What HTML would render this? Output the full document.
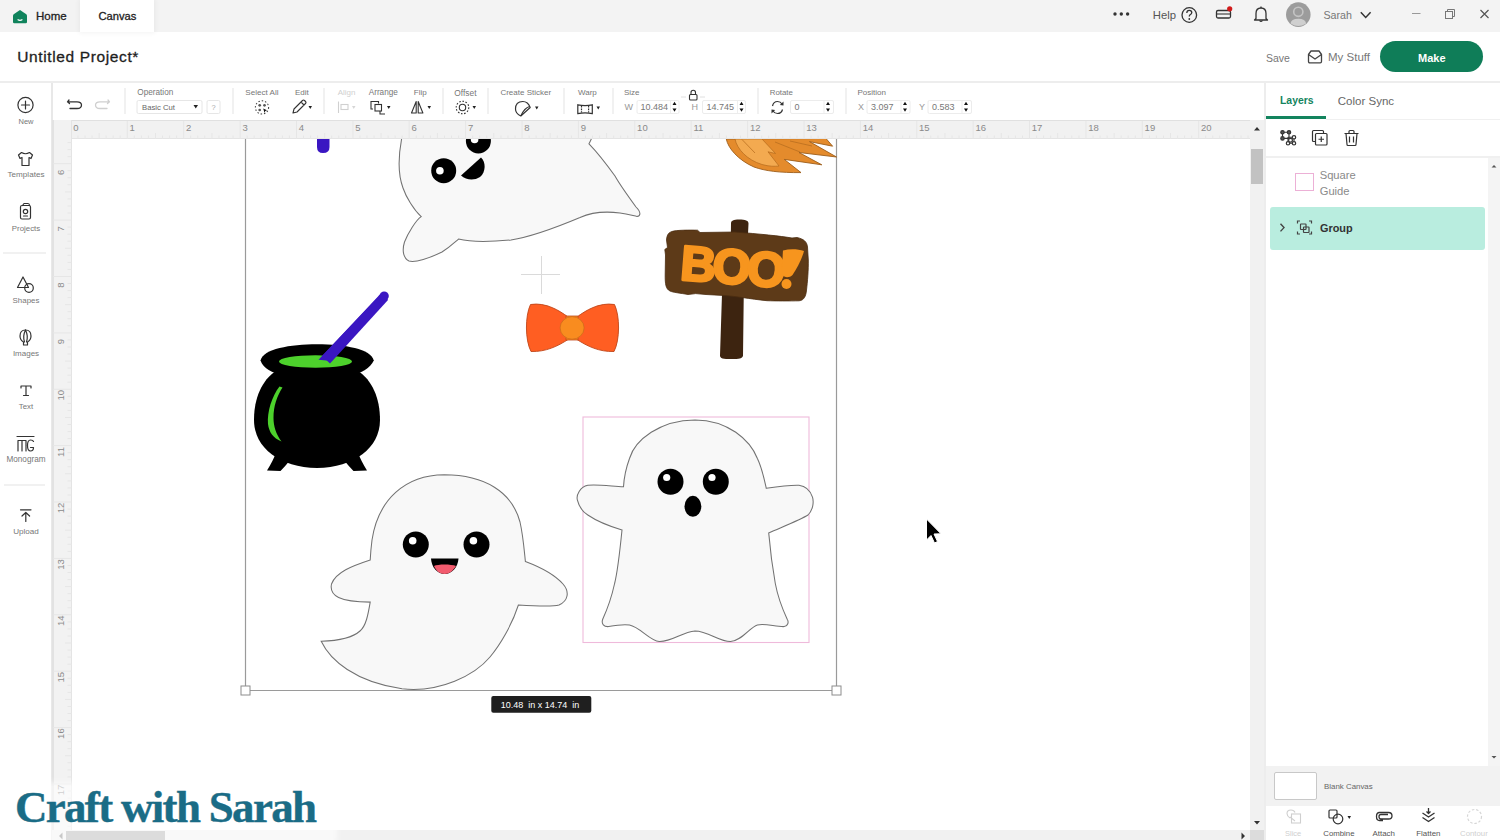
<!DOCTYPE html>
<html><head><meta charset="utf-8">
<style>
*{box-sizing:border-box}
html,body{margin:0;padding:0}
body{width:1500px;height:840px;position:relative;overflow:hidden;background:#fff;font-family:"Liberation Sans",sans-serif;color:#333}
.a{position:absolute}
.t{position:absolute;white-space:nowrap;line-height:1}
.lbl{position:absolute;white-space:nowrap;line-height:1;font-size:7.5px;color:#777}
.sep{position:absolute;top:88px;width:1px;height:26px;background:#e2e2e2}
.inp{position:absolute;top:101px;height:13px;border:1px solid #ececec;border-radius:2px;background:#fff;font-size:8px;color:#888;line-height:11px;padding-left:4px}
.sb{position:absolute;left:10px;width:32px;text-align:center;font-size:7.5px;color:#777;line-height:1}
</style></head>
<body>
<!-- top bar -->
<div class="a" style="left:0;top:0;width:1500px;height:32px;background:#f3f3f3"></div>
<div class="a" style="left:80px;top:0;width:74px;height:32px;background:#fff;box-shadow:0 0 5px 1px rgba(0,0,0,0.05)"></div>
<svg class="a" style="left:12px;top:9px" width="16" height="15" viewBox="0 0 16 15"><path d="M8 1 L14.3 5.3 Q15 5.8 15 6.8 V13 Q15 14.2 13.8 14.2 H2.2 Q1 14.2 1 13 V6.8 Q1 5.8 1.7 5.3 Z" fill="#10835c"/><path d="M5.6 10.6 Q8 12.2 10.4 10.6" stroke="#fff" stroke-width="1.2" fill="none"/></svg>
<div class="t" style="left:36px;top:11px;font-size:11.5px;color:#222;-webkit-text-stroke:0.3px #222">Home</div>
<div class="t" style="left:98.5px;top:11px;font-size:11.2px;color:#222;-webkit-text-stroke:0.3px #222">Canvas</div>
<svg class="a" style="left:1100px;top:0" width="400" height="32" viewBox="1100 0 400 32">
<circle cx="1115" cy="14" r="1.7" fill="#333"/><circle cx="1121.3" cy="14" r="1.7" fill="#333"/><circle cx="1127.6" cy="14" r="1.7" fill="#333"/>
<circle cx="1189.3" cy="15" r="7.3" fill="none" stroke="#333" stroke-width="1.3"/>
<path d="M1186.8 13 Q1186.8 10.3 1189.3 10.3 Q1191.8 10.3 1191.8 12.6 Q1191.8 14 1190 14.8 Q1189.3 15.2 1189.3 16.6" fill="none" stroke="#333" stroke-width="1.3"/><circle cx="1189.3" cy="19" r="0.9" fill="#333"/>
<rect x="1216.5" y="10.5" width="14" height="7.5" rx="1.5" fill="none" stroke="#333" stroke-width="1.3"/><path d="M1216.5 14 H1230.5" stroke="#333" stroke-width="1.1"/>
<circle cx="1229.7" cy="8.8" r="2.6" fill="#d11a1a"/>
<path d="M1256 18.5 V13.5 Q1256 8 1261 8 Q1266 8 1266 13.5 V18.5 L1267.5 20 H1254.5 Z" fill="none" stroke="#333" stroke-width="1.3" stroke-linejoin="round"/><path d="M1259.5 20.5 Q1261 22.5 1262.5 20.5" fill="none" stroke="#333" stroke-width="1.2"/><path d="M1261 6.5 V8" stroke="#333" stroke-width="1.2"/>
<circle cx="1298.3" cy="14.6" r="12.3" fill="#9c9c9c"/><circle cx="1298.3" cy="11.8" r="4.6" fill="none" stroke="#c4c4c4" stroke-width="1.6"/><path d="M1290.5 23.5 Q1291 18.8 1298.3 18.8 Q1305.6 18.8 1306.1 23.5 Q1302 26 1298.3 26 Q1294.6 26 1290.5 23.5 Z" fill="#cfcfcf"/>
<path d="M1360.8 12.3 L1365.7 17.5 L1370.6 12.3" fill="none" stroke="#333" stroke-width="1.5"/>
<path d="M1412 13.5 H1420.5" stroke="#999" stroke-width="1"/>
<rect x="1445.5" y="11.5" width="7" height="7" fill="none" stroke="#777" stroke-width="1"/><path d="M1447.5 11.5 V9.5 H1454.5 V16.5 H1452.5" fill="none" stroke="#777" stroke-width="1"/>
<path d="M1480.5 10 L1488.5 18 M1488.5 10 L1480.5 18" stroke="#555" stroke-width="1.2"/>
</svg>
<div class="t" style="left:1152.8px;top:10px;font-size:11.3px;color:#555">Help</div>
<div class="t" style="left:1323.4px;top:9.5px;font-size:10.7px;color:#777">Sarah</div>

<!-- header -->
<div class="a" style="left:0;top:81px;width:1500px;height:2px;background:#ededed"></div>
<div class="t" style="left:17.3px;top:48.9px;font-size:15.5px;letter-spacing:0.62px;color:#1e1e1e;-webkit-text-stroke:0.3px #1e1e1e">Untitled Project*</div>
<div class="t" style="left:1266px;top:53.1px;font-size:10.5px;color:#777">Save</div>
<svg class="a" style="left:1306px;top:48px" width="18" height="17" viewBox="0 0 18 17"><path d="M2.5 6.5 L5 3 H13 L15.5 6.5 V13.5 Q15.5 14.8 14.2 14.8 H3.8 Q2.5 14.8 2.5 13.5 Z" fill="none" stroke="#444" stroke-width="1.3" stroke-linejoin="round"/><path d="M2.5 6.5 L9 11 L15.5 6.5" fill="none" stroke="#444" stroke-width="1.3" stroke-linejoin="round"/></svg>
<div class="t" style="left:1328px;top:52.3px;font-size:11.5px;color:#777">My Stuff</div>
<div class="a" style="left:1379.5px;top:41.3px;width:103.7px;height:31.2px;border-radius:16px;background:#0f7d58"></div>
<div class="t" style="left:1418px;top:52.7px;font-size:11px;color:#fff;font-weight:bold">Make</div>

<!-- toolbar -->
<svg class="a" style="left:52px;top:83px" width="1212" height="37" viewBox="52 83 1212 37">
<g fill="none" stroke="#333" stroke-width="1.3" stroke-linecap="round" stroke-linejoin="round">
<path d="M69 100 L67.5 101.8 L69.5 103.5 M67.5 101.8 H77 Q81.5 101.8 81.5 105 Q81.5 108.5 77 108.5 H70"/>
</g>
<g fill="none" stroke="#cfcfcf" stroke-width="1.3" stroke-linecap="round" stroke-linejoin="round">
<path d="M108 100 L109.5 101.8 L107.5 103.5 M109.5 101.8 H100 Q95.5 101.8 95.5 105 Q95.5 108.5 100 108.5 H107"/>
</g>
<g fill="#e4e4e4"><rect x="124.5" y="88" width="1" height="26"/><rect x="232.5" y="88" width="1" height="26"/><rect x="323.5" y="88" width="1" height="26"/><rect x="442.5" y="88" width="1" height="26"/><rect x="487.5" y="88" width="1" height="26"/><rect x="563.5" y="88" width="1" height="26"/><rect x="612.5" y="88" width="1" height="26"/><rect x="757.5" y="88" width="1" height="26"/><rect x="845.5" y="88" width="1" height="26"/></g>
<!-- operation dropdown -->
<rect x="137" y="100.5" width="65" height="13" rx="1.5" fill="#fff" stroke="#e6e6e6"/>
<path d="M193.5 105 L198 105 L195.75 108.5 Z" fill="#222"/>
<rect x="207" y="100.5" width="13" height="13" rx="1.5" fill="#fff" stroke="#e6e6e6"/>
<!-- select all -->
<g fill="none" stroke="#444" stroke-width="1.1" stroke-dasharray="1.5 1.9"><circle cx="262" cy="107.4" r="6.6"/></g>
<g fill="#555"><circle cx="259.7" cy="105.3" r="1.35"/><circle cx="264.5" cy="105.3" r="1.35"/><circle cx="259.7" cy="110" r="1.35"/></g><path d="M263.2 108.6 L267 110.3 L265.3 110.9 L264.5 112.8 Z" fill="#111"/>
<!-- edit pencil -->
<path d="M293 113 L294 109 L302.5 100.5 Q303.5 99.5 304.5 100.5 L305.5 101.5 Q306.5 102.5 305.5 103.5 L297 112 Z M301 102 L304 105" fill="none" stroke="#333" stroke-width="1.1" stroke-linejoin="round"/>
<path d="M308.5 106 L312 106 L310.25 109 Z" fill="#222"/>
<!-- align -->
<g fill="none" stroke="#d0d0d0" stroke-width="1.1"><path d="M338.5 101.5 V113"/><rect x="341" y="104.5" width="7" height="5"/></g>
<path d="M352 106 L355.5 106 L353.75 109 Z" fill="#d6d6d6"/>
<!-- arrange -->
<g fill="none" stroke="#333" stroke-width="1.1"><path d="M373 109 H371 V101.5 H378.5 V103.5"/><rect x="375" y="104.5" width="6.5" height="6.5"/><path d="M380 111 V114 H385"/></g>
<path d="M387 106 L390.5 106 L388.75 109 Z" fill="#222"/>
<!-- flip -->
<g fill="none" stroke="#333" stroke-width="1.1" stroke-linejoin="round"><path d="M416.2 101.5 L411.5 113 H416.2 Z"/><path d="M418.2 101.5 L422.9 113 H418.2 Z"/></g>
<path d="M427.5 106 L431 106 L429.25 109 Z" fill="#222"/>
<!-- offset -->
<g fill="none" stroke="#333" stroke-width="1.1"><circle cx="462.5" cy="107.5" r="3.2"/><circle cx="462.5" cy="107.5" r="6.3" stroke-dasharray="1.6 1.6"/></g>
<path d="M472.5 106 L476 106 L474.25 109 Z" fill="#222"/>
<!-- create sticker -->
<g fill="none" stroke="#333" stroke-width="1.2" stroke-linejoin="round"><path d="M530.2 107.5 Q528 101.5 522.8 101.5 Q515.5 101.5 515.5 109 Q515.5 113.5 520.8 116 L530.2 107.5 Z"/><path d="M529.5 106.5 Q524.5 108 521 115.5"/></g>
<path d="M535 106.5 L538.5 106.5 L536.75 109.5 Z" fill="#222"/>
<!-- warp -->
<g fill="none" stroke="#333" stroke-width="1.2"><path d="M577.8 104.8 Q585 106.3 592.3 104.8 V113.6 Q585 112.1 577.8 113.6 Z"/><path d="M581.5 105.8 V112.6 M588.6 105.8 V112.6" stroke-dasharray="1.8 0.9"/></g>
<path d="M596.5 106.5 L600 106.5 L598.25 109.5 Z" fill="#222"/>
<!-- size lock -->
<g fill="none" stroke="#333" stroke-width="1.1"><rect x="689.5" y="94.5" width="7.5" height="5.5" rx="1"/><path d="M691 94.5 V92.5 Q691 90.3 693.25 90.3 Q695.5 90.3 695.5 92.5 V94.5"/></g>
<path d="M681 97 H686 M700 97 H705" stroke="#e0e0e0" stroke-width="1"/>
<!-- inputs -->
<rect x="637" y="100.5" width="42" height="13" rx="1.5" fill="#fff" stroke="#ececec"/>
<rect x="702.5" y="100.5" width="43" height="13" rx="1.5" fill="#fff" stroke="#ececec"/>
<rect x="790.5" y="100.5" width="43" height="13" rx="1.5" fill="#fff" stroke="#ececec"/>
<rect x="867" y="100.5" width="43" height="13" rx="1.5" fill="#fff" stroke="#ececec"/>
<rect x="928" y="100.5" width="43.5" height="13" rx="1.5" fill="#fff" stroke="#ececec"/>
<g fill="#111"><path d="M672.5 105 L676.5 105 L674.5 101.8 Z M672.5 108.6 L676.5 108.6 L674.5 111.8 Z"/><path d="M739.5 105 L743.5 105 L741.5 101.8 Z M739.5 108.6 L743.5 108.6 L741.5 111.8 Z"/><path d="M826 105 L830 105 L828 101.8 Z M826 108.6 L830 108.6 L828 111.8 Z"/><path d="M903 105 L907 105 L905 101.8 Z M903 108.6 L907 108.6 L905 111.8 Z"/><path d="M964 105 L968 105 L966 101.8 Z M964 108.6 L968 108.6 L966 111.8 Z"/></g>
<g fill="#eee"><rect x="670" y="101" width="1" height="12"/><rect x="737" y="101" width="1" height="12"/><rect x="823.5" y="101" width="1" height="12"/><rect x="900.5" y="101" width="1" height="12"/><rect x="961.5" y="101" width="1" height="12"/></g>
<!-- rotate -->
<g fill="none" stroke="#333" stroke-width="1.2"><path d="M772.5 106 Q773.5 101.5 777.5 101.5 Q780.5 101.5 782 104"/><path d="M782.5 109.5 Q781.5 113.5 777.5 113.5 Q774.5 113.5 773 111"/></g>
<g fill="#333"><path d="M783.5 101.5 L783.5 105.5 L779.8 105 Z"/><path d="M771.5 113.5 L771.5 109.5 L775.2 110 Z"/></g>
</svg>
<div class="lbl" style="left:137.3px;top:88.5px;font-size:8.2px">Operation</div>
<div class="t" style="left:142px;top:103.5px;font-size:7.7px;color:#666">Basic Cut</div>
<div class="t" style="left:211.5px;top:103.5px;font-size:7.5px;color:#aaa">?</div>
<div class="lbl" style="left:245.3px;top:88.5px;font-size:8.1px">Select All</div>
<div class="lbl" style="left:295px;top:88.5px;font-size:8px">Edit</div>
<div class="lbl" style="left:337.7px;top:88.5px;font-size:8px;color:#d0d0d0">Align</div>
<div class="lbl" style="left:368.7px;top:88.5px;font-size:8.2px">Arrange</div>
<div class="lbl" style="left:413.8px;top:88.5px;font-size:8px">Flip</div>
<div class="lbl" style="left:454.3px;top:88.5px;font-size:8.4px">Offset</div>
<div class="lbl" style="left:500.4px;top:88.5px;font-size:8px">Create Sticker</div>
<div class="lbl" style="left:578px;top:88.5px;font-size:8px">Warp</div>
<div class="lbl" style="left:624px;top:88.5px;font-size:8px">Size</div>
<div class="lbl" style="left:769.7px;top:88.5px;font-size:7.9px">Rotate</div>
<div class="lbl" style="left:857.4px;top:88.5px;font-size:8px">Position</div>
<div class="t" style="left:624.5px;top:103.2px;font-size:9px;color:#999">W</div>
<div class="t" style="left:640.5px;top:103.2px;font-size:9px;color:#777">10.484</div>
<div class="t" style="left:691.5px;top:103.2px;font-size:9px;color:#999">H</div>
<div class="t" style="left:706.5px;top:103.2px;font-size:9px;color:#777">14.745</div>
<div class="t" style="left:794.5px;top:103.2px;font-size:9px;color:#777">0</div>
<div class="t" style="left:858px;top:103.2px;font-size:9px;color:#999">X</div>
<div class="t" style="left:871px;top:103.2px;font-size:9px;color:#777">3.097</div>
<div class="t" style="left:919px;top:103.2px;font-size:9px;color:#999">Y</div>
<div class="t" style="left:932px;top:103.2px;font-size:9px;color:#777">0.583</div>

<!-- left sidebar -->
<div class="a" style="left:51px;top:83px;width:1.5px;height:757px;background:#e8e8e8"></div>
<svg class="a" style="left:0;top:83px" width="52" height="470" viewBox="0 83 52 470">
<g fill="none" stroke="#333" stroke-width="1.2" stroke-linecap="round" stroke-linejoin="round">
<circle cx="25.5" cy="105" r="7.6"/><path d="M25.5 101 V109 M21.5 105 H29.5"/>
<path d="M21.5 152.5 L18.5 155 L20 158.5 L22 157.5 V165.5 H29 V157.5 L31 158.5 L32.5 155 L29.5 152.5 Q25.5 155 21.5 152.5 Z"/>
<rect x="20.5" y="205.5" width="10" height="13.5" rx="1.5"/><path d="M22.5 205.5 L24 203.5 H28 Q29.5 203.5 29.5 205.5"/><circle cx="25.5" cy="211.5" r="2.2"/><path d="M23.5 216 H27.5"/>
<path d="M17.5 287.5 L23 277 L28.5 287.5 Z"/><circle cx="29" cy="288" r="4.3"/>
<path d="M25.5 330 Q31 330 31 336 Q31 340 27.5 342 V345 H23.5 V342 Q20 340 20 336 Q20 330 25.5 330 Z"/><path d="M25.5 330 Q22.5 336 24.5 342 M25.5 330 Q28.5 336 26.5 342"/>
<path d="M21 386 H31 M26 386 V395.5 M23.5 395.5 H28.5 M21 386 V388 M31 386 V388"/>
<path d="M17 436.5 H34 M18 451 V440.5 H26 V451 M22 440.5 V451 M33.5 441.5 Q33 440 30.5 440 Q27.5 440 27.5 445.5 Q27.5 451 30.5 451 Q33.5 451 33.5 447.5 H30.5"/>
<path d="M20.5 509.8 H31 M25.8 521.5 V512.5 M22 516 L25.8 512.5 L29.6 516"/>
</g>
<rect x="3" y="252.5" width="43" height="1" fill="#e4e4e4"/>
<rect x="4" y="484.5" width="41" height="1" fill="#e4e4e4"/>
</svg>
<div class="sb" style="top:117.5px;font-size:7.5px">New</div>
<div class="sb" style="top:171px;left:6px;width:40px;font-size:8.1px">Templates</div>
<div class="sb" style="top:224.5px;font-size:7.9px">Projects</div>
<div class="sb" style="top:296.5px;font-size:7.9px">Shapes</div>
<div class="sb" style="top:350px;font-size:8px">Images</div>
<div class="sb" style="top:403px;font-size:7.8px">Text</div>
<div class="sb" style="top:456px;left:4px;width:44px;font-size:8.2px">Monogram</div>
<div class="sb" style="top:528px;font-size:8.1px">Upload</div>

<!-- rulers -->
<div class="a" style="left:52px;top:120px;width:1198px;height:19px;background:#f1f1f1;border-top:1px solid #e0e0e0;border-bottom:1px solid #e4e4e4"></div>
<div class="a" style="left:52px;top:120px;width:20px;height:710px;background:#f2f2f2;border-right:1px solid #e4e4e4;border-left:2px solid #e2e2e2"></div>
<!--RULERSVG--><svg class="a" style="left:52px;top:120px" width="1198" height="19" viewBox="52 120 1198 19">
<path d="M77.9 135.5V139 M85.0 135.5V139 M92.0 135.5V139 M99.1 133V139 M106.1 135.5V139 M113.2 135.5V139 M120.2 135.5V139 M127.3 121V139 M134.3 135.5V139 M141.4 135.5V139 M148.4 135.5V139 M155.5 133V139 M162.5 135.5V139 M169.6 135.5V139 M176.6 135.5V139 M183.7 121V139 M190.7 135.5V139 M197.8 135.5V139 M204.8 135.5V139 M211.9 133V139 M218.9 135.5V139 M226.0 135.5V139 M233.0 135.5V139 M240.1 121V139 M247.1 135.5V139 M254.2 135.5V139 M261.2 135.5V139 M268.3 133V139 M275.3 135.5V139 M282.4 135.5V139 M289.4 135.5V139 M296.5 121V139 M303.5 135.5V139 M310.6 135.5V139 M317.6 135.5V139 M324.7 133V139 M331.7 135.5V139 M338.8 135.5V139 M345.8 135.5V139 M352.9 121V139 M359.9 135.5V139 M366.9 135.5V139 M374.0 135.5V139 M381.0 133V139 M388.1 135.5V139 M395.1 135.5V139 M402.2 135.5V139 M409.2 121V139 M416.3 135.5V139 M423.3 135.5V139 M430.4 135.5V139 M437.4 133V139 M444.5 135.5V139 M451.5 135.5V139 M458.6 135.5V139 M465.6 121V139 M472.7 135.5V139 M479.7 135.5V139 M486.8 135.5V139 M493.8 133V139 M500.9 135.5V139 M507.9 135.5V139 M515.0 135.5V139 M522.0 121V139 M529.1 135.5V139 M536.1 135.5V139 M543.2 135.5V139 M550.2 133V139 M557.3 135.5V139 M564.3 135.5V139 M571.4 135.5V139 M578.4 121V139 M585.5 135.5V139 M592.5 135.5V139 M599.6 135.5V139 M606.6 133V139 M613.7 135.5V139 M620.7 135.5V139 M627.8 135.5V139 M634.8 121V139 M641.8 135.5V139 M648.9 135.5V139 M655.9 135.5V139 M663.0 133V139 M670.0 135.5V139 M677.1 135.5V139 M684.1 135.5V139 M691.2 121V139 M698.2 135.5V139 M705.3 135.5V139 M712.3 135.5V139 M719.4 133V139 M726.4 135.5V139 M733.5 135.5V139 M740.5 135.5V139 M747.6 121V139 M754.6 135.5V139 M761.7 135.5V139 M768.7 135.5V139 M775.8 133V139 M782.8 135.5V139 M789.9 135.5V139 M796.9 135.5V139 M804.0 121V139 M811.0 135.5V139 M818.1 135.5V139 M825.1 135.5V139 M832.2 133V139 M839.2 135.5V139 M846.3 135.5V139 M853.3 135.5V139 M860.4 121V139 M867.4 135.5V139 M874.5 135.5V139 M881.5 135.5V139 M888.6 133V139 M895.6 135.5V139 M902.7 135.5V139 M909.7 135.5V139 M916.8 121V139 M923.8 135.5V139 M930.8 135.5V139 M937.9 135.5V139 M944.9 133V139 M952.0 135.5V139 M959.0 135.5V139 M966.1 135.5V139 M973.1 121V139 M980.2 135.5V139 M987.2 135.5V139 M994.3 135.5V139 M1001.3 133V139 M1008.4 135.5V139 M1015.4 135.5V139 M1022.5 135.5V139 M1029.5 121V139 M1036.6 135.5V139 M1043.6 135.5V139 M1050.7 135.5V139 M1057.7 133V139 M1064.8 135.5V139 M1071.8 135.5V139 M1078.9 135.5V139 M1085.9 121V139 M1093.0 135.5V139 M1100.0 135.5V139 M1107.1 135.5V139 M1114.1 133V139 M1121.2 135.5V139 M1128.2 135.5V139 M1135.3 135.5V139 M1142.3 121V139 M1149.4 135.5V139 M1156.4 135.5V139 M1163.5 135.5V139 M1170.5 133V139 M1177.6 135.5V139 M1184.6 135.5V139 M1191.7 135.5V139 M1198.7 121V139 M1205.7 135.5V139 M1212.8 135.5V139 M1219.8 135.5V139 M1226.9 133V139 M1233.9 135.5V139 M1241.0 135.5V139 M1248.0 135.5V139" stroke="#e6e6e6" stroke-width="1" fill="none"/>
<g font-family="Liberation Sans" font-size="9.5" fill="#8a8a8a"><text x="73.2" y="130.8">0</text><text x="129.6" y="130.8">1</text><text x="186.0" y="130.8">2</text><text x="242.4" y="130.8">3</text><text x="298.8" y="130.8">4</text><text x="355.2" y="130.8">5</text><text x="411.5" y="130.8">6</text><text x="467.9" y="130.8">7</text><text x="524.3" y="130.8">8</text><text x="580.7" y="130.8">9</text><text x="637.1" y="130.8">10</text><text x="693.5" y="130.8">11</text><text x="749.9" y="130.8">12</text><text x="806.3" y="130.8">13</text><text x="862.7" y="130.8">14</text><text x="919.0" y="130.8">15</text><text x="975.4" y="130.8">16</text><text x="1031.8" y="130.8">17</text><text x="1088.2" y="130.8">18</text><text x="1144.6" y="130.8">19</text><text x="1201.0" y="130.8">20</text></g>
</svg>
<svg class="a" style="left:52px;top:139px" width="20" height="691" viewBox="52 139 20 691">
<path d="M67.5 142.6H72 M67.5 149.6H72 M67.5 156.7H72 M53 163.7H72 M67.5 170.7H72 M67.5 177.8H72 M67.5 184.8H72 M65 191.9H72 M67.5 198.9H72 M67.5 206.0H72 M67.5 213.0H72 M53 220.1H72 M67.5 227.1H72 M67.5 234.2H72 M67.5 241.2H72 M65 248.3H72 M67.5 255.3H72 M67.5 262.4H72 M67.5 269.4H72 M53 276.5H72 M67.5 283.5H72 M67.5 290.6H72 M67.5 297.6H72 M65 304.7H72 M67.5 311.7H72 M67.5 318.8H72 M67.5 325.8H72 M53 332.9H72 M67.5 339.9H72 M67.5 347.0H72 M67.5 354.0H72 M65 361.1H72 M67.5 368.1H72 M67.5 375.2H72 M67.5 382.2H72 M53 389.3H72 M67.5 396.3H72 M67.5 403.4H72 M67.5 410.4H72 M65 417.5H72 M67.5 424.5H72 M67.5 431.6H72 M67.5 438.6H72 M53 445.6H72 M67.5 452.7H72 M67.5 459.7H72 M67.5 466.8H72 M65 473.8H72 M67.5 480.9H72 M67.5 487.9H72 M67.5 495.0H72 M53 502.0H72 M67.5 509.1H72 M67.5 516.1H72 M67.5 523.2H72 M65 530.2H72 M67.5 537.3H72 M67.5 544.3H72 M67.5 551.4H72 M53 558.4H72 M67.5 565.5H72 M67.5 572.5H72 M67.5 579.6H72 M65 586.6H72 M67.5 593.7H72 M67.5 600.7H72 M67.5 607.8H72 M53 614.8H72 M67.5 621.9H72 M67.5 628.9H72 M67.5 636.0H72 M65 643.0H72 M67.5 650.1H72 M67.5 657.1H72 M67.5 664.2H72 M53 671.2H72 M67.5 678.3H72 M67.5 685.3H72 M67.5 692.4H72 M65 699.4H72 M67.5 706.5H72 M67.5 713.5H72 M67.5 720.6H72 M53 727.6H72 M67.5 734.6H72 M67.5 741.7H72 M67.5 748.7H72 M65 755.8H72 M67.5 762.8H72 M67.5 769.9H72 M67.5 776.9H72 M53 784.0H72 M67.5 791.0H72 M67.5 798.1H72 M67.5 805.1H72 M65 812.2H72 M67.5 819.2H72 M67.5 826.3H72" stroke="#e6e6e6" stroke-width="1" fill="none"/>
<g font-family="Liberation Sans" font-size="9.5" fill="#8a8a8a"><text transform="translate(63.6 175.0) rotate(-90)">6</text><text transform="translate(63.6 231.4) rotate(-90)">7</text><text transform="translate(63.6 287.8) rotate(-90)">8</text><text transform="translate(63.6 344.2) rotate(-90)">9</text><text transform="translate(63.6 400.6) rotate(-90)">10</text><text transform="translate(63.6 456.9) rotate(-90)">11</text><text transform="translate(63.6 513.3) rotate(-90)">12</text><text transform="translate(63.6 569.7) rotate(-90)">13</text><text transform="translate(63.6 626.1) rotate(-90)">14</text><text transform="translate(63.6 682.5) rotate(-90)">15</text><text transform="translate(63.6 738.9) rotate(-90)">16</text><text transform="translate(63.6 795.3) rotate(-90)">17</text></g>
</svg><!--/RULERSVG-->
<!-- scrollbars -->
<div class="a" style="left:1250px;top:120px;width:14px;height:710px;background:#f1f1f1"></div>
<div class="a" style="left:1251px;top:149px;width:12px;height:35px;background:#c2c2c2"></div>
<div class="a" style="left:52px;top:830px;width:1198px;height:10px;background:#f1f1f1"></div>
<div class="a" style="left:1250px;top:830px;width:14px;height:10px;background:#dcdcdc"></div>
<div class="a" style="left:66px;top:831px;width:99px;height:9px;background:#d6d6d6"></div>
<svg class="a" style="left:1240px;top:120px" width="24" height="720" viewBox="1240 120 24 720"><path d="M1254 130.5 L1260 130.5 L1257 127 Z M1254 821 L1260 821 L1257 824.5 Z M1241.5 832.5 V839.5 L1245 836 Z" fill="#333"/></svg>
<svg class="a" style="left:55px;top:830px" width="10" height="10" viewBox="55 830 10 10"><path d="M62.5 832.5 V839.5 L59 836 Z" fill="#777"/></svg>

<!-- right panel -->
<div class="a" style="left:1264px;top:83px;width:236px;height:757px;background:#fff;border-left:2px solid #ededed"></div>
<div class="t" style="left:1280px;top:96.2px;font-size:10.4px;color:#13845e;font-weight:bold">Layers</div>
<div class="t" style="left:1337.8px;top:95.5px;font-size:11.5px;color:#666">Color Sync</div>
<div class="a" style="left:1266px;top:116px;width:60px;height:3px;background:#13845e"></div>
<div class="a" style="left:1326px;top:118.5px;width:174px;height:1px;background:#f0f0f0"></div>
<svg class="a" style="left:1266px;top:120px" width="234" height="38" viewBox="1266 120 234 38">
<g fill="none" stroke="#333" stroke-width="1.2" stroke-linejoin="round">
<path d="M1282.5 132.3 H1289 V138.4 H1282.5 Z" stroke-width="1.1"/><path d="M1288 137.3 L1294 137.3 L1294 143.3 L1288 143.3 Z" stroke-width="1.1"/>
<circle cx="1282.5" cy="132.3" r="1.7" fill="#555"/><circle cx="1289" cy="132.3" r="1.7" fill="#555"/><circle cx="1282.5" cy="138.4" r="1.7" fill="#555"/>
<circle cx="1294" cy="137.3" r="1.7" fill="#fff"/><circle cx="1288" cy="143.3" r="1.7" fill="#fff"/><circle cx="1294" cy="143.3" r="1.7" fill="#fff"/><circle cx="1290.5" cy="140.3" r="1.9" fill="#fff"/>
<path d="M1315.5 141.5 H1313.5 Q1312.5 141.5 1312.5 140.5 V131.5 Q1312.5 130.5 1313.5 130.5 H1322.5 Q1323.5 130.5 1323.5 131.5 V133.5"/><rect x="1315.5" y="133.5" width="11.5" height="11.5" rx="1"/><path d="M1321.25 136.5 V142 M1318.5 139.25 H1324"/>
<path d="M1344.5 133.5 H1358.5 M1349 133.5 V131.5 Q1349 130.5 1350 130.5 H1353 Q1354 130.5 1354 131.5 V133.5 M1346 133.5 L1347 144.5 Q1347 145.5 1348 145.5 H1355 Q1356 145.5 1356 144.5 L1357 133.5 M1349.5 136.5 V142.5 M1353.5 136.5 V142.5"/>
</g>
</svg>
<div class="a" style="left:1266px;top:156px;width:234px;height:2px;background:#f0f0f0"></div>
<div class="a" style="left:1488px;top:158px;width:12px;height:608px;background:#f4f4f4"></div>
<svg class="a" style="left:1488px;top:158px" width="12" height="608" viewBox="1488 158 12 608"><path d="M1491.5 167.5 L1496.5 167.5 L1494 165 Z M1491.5 756 L1496.5 756 L1494 758.5 Z" fill="#555"/></svg>
<div class="a" style="left:1295px;top:173px;width:18.5px;height:18px;border:1px solid #ecb0d6"></div>
<div class="t" style="left:1319.7px;top:167.2px;font-size:11.2px;color:#8a8a8a;line-height:16px">Square<br>Guide</div>
<div class="a" style="left:1270.4px;top:206.5px;width:214.5px;height:43px;background:#b9eddf;border-radius:3px"></div>
<svg class="a" style="left:1270px;top:206px" width="60" height="44" viewBox="1270 206 60 44">
<path d="M1280.5 223.8 L1284 227.6 L1280.5 231.4" fill="none" stroke="#444" stroke-width="1.4"/>
<g fill="none" stroke="#444" stroke-width="1.2"><path d="M1297.5 223.5 V221 H1300 M1309 221 H1311.5 V223.5 M1311.5 231.5 V234 H1309 M1300 234 H1297.5 V231.5"/><rect x="1300.5" y="224" width="5.5" height="5.5" rx="0.5"/><rect x="1303.5" y="227" width="5.5" height="5.5" rx="0.5"/></g>
</svg>
<div class="t" style="left:1320px;top:223.2px;font-size:10.9px;color:#333;font-weight:bold">Group</div>
<div class="a" style="left:1266px;top:766px;width:234px;height:40px;background:#f2f2f2"></div>
<div class="a" style="left:1274px;top:771.5px;width:43px;height:28px;background:#fff;border:1.5px solid #c8c8c8;border-radius:2px"></div>
<div class="t" style="left:1324px;top:782.5px;font-size:7.9px;color:#666">Blank Canvas</div>
<svg class="a" style="left:1266px;top:806px" width="234" height="34" viewBox="1266 806 234 34">
<g fill="none" stroke="#cfcfcf" stroke-width="1.1"><path d="M1290 818 Q1287 816 1287 813.5 Q1287 810 1291 810 Q1294 810 1295 812.5"/><rect x="1291.5" y="814" width="9" height="9"/><path d="M1290 817 L1295 821" /></g>
<g fill="none" stroke="#333" stroke-width="1.2"><rect x="1329" y="810" width="8" height="8" rx="1"/><circle cx="1338" cy="819" r="4.8"/></g>
<path d="M1347.5 816 L1351 816 L1349.25 819 Z" fill="#222"/>
<g fill="none" stroke="#333" stroke-width="1.3"><path d="M1383 820.5 H1379.5 Q1376.5 820.5 1376.5 816.5 Q1376.5 812.5 1379.5 812.5 H1388.5 Q1392 812.5 1392 816 Q1392 819 1388.5 819 H1381 Q1379 819 1379 816.5 Q1379 814.5 1381 814.5 H1388"/></g>
<g fill="none" stroke="#333" stroke-width="1.3" stroke-linejoin="round"><path d="M1428.5 808 V813.5 M1426.5 811.5 L1428.5 813.5 L1430.5 811.5"/><path d="M1422.5 813 L1428.5 817 L1434.5 813"/><path d="M1422.5 817.5 L1428.5 821.5 L1434.5 817.5"/></g>
<circle cx="1474.5" cy="816.5" r="7" fill="none" stroke="#d6d6d6" stroke-width="1.2" stroke-dasharray="2.5 1.8"/>
</svg>
<div class="t" style="left:1285px;top:829.5px;font-size:7.5px;color:#cfcfcf">Slice</div>
<div class="t" style="left:1323.3px;top:829.5px;font-size:7.8px;color:#555">Combine</div>
<div class="t" style="left:1372.5px;top:829.5px;font-size:7.9px;color:#555">Attach</div>
<div class="t" style="left:1416.3px;top:829.5px;font-size:7.9px;color:#555">Flatten</div>
<div class="t" style="left:1460px;top:829.5px;font-size:7.8px;color:#cfcfcf">Contour</div>

<!-- canvas -->
<div class="a" style="left:72px;top:139px;width:1178px;height:691px;background:#fff;overflow:hidden">
<svg class="a" style="left:-72px;top:-139px" width="1500" height="840" viewBox="0 0 1500 840">
<!-- bounding box -->
<path d="M245.5 100 V690.5 H836.5 V100" fill="none" stroke="#9a9a9a" stroke-width="1.2"/>
<!-- crosshair -->
<path d="M541.5 256 V294 M521 274.5 H560" stroke="#dadada" stroke-width="1"/>
<!-- purple stick end top -->
<path d="M317 130 L317 147 Q317 153 323 153 Q329.5 153 329.5 147 L329.5 130 Z" fill="#3a16c2"/>
<!-- top ghost -->
<path d="M403 132 C399 150,397 172,403 188 C406 197,414 210,421.2 216.6 C416 220,408 233,404.5 242 C402 250,403 258,409 261 C415 263,430 258,442 252 C450 247,455 242,458.5 239.1 C470 242,490 242,511 240 C530 237,555 228,580 217.5 C590 213,605 211,620 213 C628 214,634 216,637 216.5 C641 216,641 212,636 207 C628 196,620 185,615 176 C605 162,595 150,589 143.8 C590 141,592 139,594 132 Z" fill="#f8f8f8" stroke="#727272" stroke-width="1.05"/>
<circle cx="443.7" cy="170.7" r="12.5" fill="#000"/><circle cx="439.9" cy="170.7" r="3.8" fill="#fff"/>
<circle cx="478.4" cy="141" r="12.5" fill="#000"/><circle cx="474.6" cy="139.5" r="3.8" fill="#fff"/>
<path d="M461 175.5 L481 157.5 C486 162,486 172,480 177 C474 181,466 180,461 175.5 Z" fill="#000"/>
<!-- broom -->
<path d="M726.3 139 C728 148,738 160,754 167 C765 171,780 172.8,801 172.6 L784.3 159.4 L821.8 164.8 L799 152.5 L836.5 157 L809.5 141.6 L832.6 146.2 L826 138.5 Z" fill="#e48b2c" stroke="#9c5c1a" stroke-width="0.9" stroke-linejoin="round"/>
<path d="M735 139 C737 149,747 160,762 164.5 C769 166.5,775 166.5,779 166 L768 151.8 L775.5 153.5 L762 139 Z" fill="#f3aa50" stroke="#b36a1c" stroke-width="0.7"/>
<path d="M742 139.5 L755 153 M775 142 L800 152 M790 141 L812 146" stroke="#b36a1c" stroke-width="0.7" fill="none"/>
<!-- cauldron -->
<path d="M276 371 C262 380,254 398,254 420 C254 448,280 467.5,317 468 C354 467.5,380 448,380 420 C380 398,372 380,358 371 Z" fill="#000"/>
<path d="M267 470.5 C271 464,274 458,277 451 L291 459 C287 464,283.5 468,280.5 471 Z" fill="#000"/>
<path d="M367 470.5 C363 464,360 458,357 451 L343 459 C347 464,350.5 468,353.5 471 Z" fill="#000"/>
<path d="M260.5 360.5 C263 349,290 344.3,317 344.3 C345 344.3,371 349,373.8 360.5 C370 368,362 373,350 376 L284 376 C272 373,263 368,260.5 360.5 Z" fill="#000"/>
<ellipse cx="315.5" cy="361.5" rx="36.5" ry="6.3" fill="#4dd12c"/>
<path d="M386.5 298 C388.5 296,386 291.5,382 293 C380.5 293.5,379 295,378 296.5 L318.5 359.8 L331.5 361 Z" fill="#3a16c2"/>
<path d="M383.2 291.8 L322 356 L330 363.5 L388 300 Z" fill="#3a16c2"/>
<circle cx="384.2" cy="296" r="4.6" fill="#3a16c2"/>
<path d="M279.5 386.5 C272 396,267 412,268 424 C269 432,273 438,281.5 441.5 C276 434,273.5 426,273.5 418 C273.5 406,277 396,282.5 387.5 Z" fill="#4dd12c"/>
<!-- bowtie -->
<path d="M530.5 304.5 C546 302,560 311,568 317 L568 339.5 C558 346,546 352,531 351.5 C525 340,525 316,530.5 304.5 Z" fill="#ff5e22" stroke="#c0461a" stroke-width="0.9"/>
<path d="M614.5 304.5 C599 302,585 311,577 317 L577 339.5 C587 346,599 352,614 351.5 C620 340,620 316,614.5 304.5 Z" fill="#ff5e22" stroke="#c0461a" stroke-width="0.9"/>
<path d="M566 316 L578 316 L578 340 L566 340 Z" fill="#f98c1f" stroke="#c0461a" stroke-width="0.8"/>
<ellipse cx="572.1" cy="327.9" rx="12" ry="11.3" fill="#f98c1f" stroke="#c86a1a" stroke-width="0.7"/>
<!-- boo sign -->
<path d="M731 223.5 C731 220.5,733.5 219.5,739 219.5 C745.5 219.5,748.5 220.5,748.5 223.5 L748 234 L744.5 234 L743 355.5 C742.8 358.5,739 359,731.5 359 C723 359,720 358.5,720 355.5 L722 294 L730 294 Z" fill="#3d2410"/>
<path d="M672 231.5 C676 230,690 230,697.5 230.2 L700 232.5 L735 232 C760 234,780 236,792 238 L797 237.5 C804 239,807 242,807.5 247 L808.3 260 C808.5 270,807.5 282,806.5 290 C806 296,804 300.5,799 300.8 C790 301,775 301,767 300.7 C750 299,735 296,722.5 295.4 L706 294.5 L695.7 293.6 L688 294.5 C680 293,673 292.5,670 291 C666 289,665 285,665.2 274 L665.5 255 L664.8 249.5 L667.5 247.5 L666.5 240 C667 234,669 232.5,672 231.5 Z" fill="#5d3a18" stroke="#4a2c10" stroke-width="0.8"/>
<text x="0" y="0" transform="translate(679.5,279.5) rotate(4.5)" font-family="Liberation Sans" font-weight="bold" font-size="49" fill="#f7951e" stroke="#f7951e" stroke-width="2.8" stroke-linejoin="round" letter-spacing="-3.4">BOO</text>
<path d="M783 250.5 C790 248.5,798 249,804 251 C802 259,797 268,792.5 275 C789.5 278,784 278,782.5 274.5 C782 266,782.5 258,783 250.5 Z" fill="#f7951e"/>
<circle cx="786.5" cy="284" r="5" fill="#f7951e"/>
<!-- ghost smile -->
<path d="M444.3 474.8 C405 475,378 500,372 540 C371 548,370.5 554,370.2 560 C352 566,336 572,331.5 584 C329 596,340 602,370.2 602.1 C368 615,366 626,360 631 C350 640,330 641,321.2 641.3 C330 660,355 682,402 688.8 C440 693,475 675,490 657 C500 645,512 625,518.4 605 C535 606,552 607,559 605 C568 601,570 592,563 584 C555 575,540 567,525.4 561.5 C524 548,523 535,520 522 C512 492,485 475,444.3 474.8 Z" fill="#f8f8f8" stroke="#727272" stroke-width="1.05"/>
<circle cx="415.8" cy="544.5" r="13" fill="#000"/><circle cx="412.7" cy="540.8" r="3.8" fill="#fff"/>
<circle cx="476.5" cy="544.5" r="13" fill="#000"/><circle cx="473.4" cy="540.8" r="3.8" fill="#fff"/>
<path d="M431 558.5 L458.5 558.5 C458 567,452 574,444.7 574 C437 574,431.5 567,431 558.5 Z" fill="#000"/>
<path d="M434 566 C438 564,451 564,456 566 C453 571,449 574,444.7 574 C440 574,436 571,434 566 Z" fill="#f25b6e"/>
<!-- selection box -->
<rect x="583" y="417" width="226" height="225.5" fill="none" stroke="#efbadb" stroke-width="1.1"/>
<!-- ghost 3 -->
<path d="M695 419.9 C660 420,635 440,629.5 458.5 C626 468,624 478,623.5 486.8 C610 486,595 484,587.8 485.3 C580 487,576 495,577.4 500.2 C579 507,583 512,587.8 515 C598 522,612 527,622 530 C620 550,618 570,614.6 583.5 C611 600,606 612,602.7 619.2 C601 624,604 627,608.7 626.6 C617 625,624 624,629.5 625 C640 627,650 641,659.2 641.5 C672 642,682 632,695 631 C708 631,720 642,730.6 641.5 C742 641,750 627,757.4 625 C765 623,776 627,784.2 626.6 C788 626,789 622,787.2 619.2 C782 608,778 598,775.3 583.5 C772 565,770 548,768.7 532.9 C782 527,800 520,808 515 C813 510,814 502,812.5 497.2 C810 490,805 486,799 485.3 C790 485,775 487,766.3 488.3 C764 478,762 468,757.4 458.5 C750 440,728 420,695 419.9 Z" fill="#f8f8f8" stroke="#727272" stroke-width="1.05"/>
<circle cx="670.5" cy="481.8" r="13" fill="#000"/><circle cx="666.7" cy="477.5" r="3.6" fill="#fff"/>
<circle cx="715.8" cy="481.8" r="13" fill="#000"/><circle cx="712" cy="477.5" r="3.6" fill="#fff"/>
<ellipse cx="692.9" cy="506.3" rx="8.4" ry="10.5" fill="#000"/>
<!-- handles -->
<rect x="241" y="686" width="9" height="9" fill="#fff" stroke="#8c8c8c" stroke-width="1"/>
<rect x="832" y="686" width="9" height="9" fill="#fff" stroke="#8c8c8c" stroke-width="1"/>
<!-- size label -->
<rect x="491.3" y="696" width="100" height="16.7" rx="2" fill="#1f1f1f"/>
<text x="500.7" y="707.8" font-family="Liberation Sans" font-size="9" fill="#fff" style="white-space:pre">10.48  in x 14.74  in</text>
<!-- cursor -->
<path d="M926.5 519 L926.5 540 L931 535.5 L934.5 543 L937.5 541.5 L934 534 L941 533.8 Z" fill="#000" stroke="#fff" stroke-width="1"/>
</svg>
</div>
<!-- watermark -->
<div class="a" style="left:8px;top:786px;width:325px;height:54px;background:rgba(255,255,255,0.6);box-shadow:0 0 6px 4px rgba(255,255,255,0.6)"></div>
<div class="a" style="left:66px;top:831px;width:99px;height:9px;background:#dcdcdc"></div>
<div class="t" style="left:15px;top:784.8px;font-family:'Liberation Serif',serif;font-weight:bold;font-size:45px;letter-spacing:-1.7px;color:#1a6c86;-webkit-text-stroke:0.4px #1a6c86">Craft with Sarah</div>
</body></html>
